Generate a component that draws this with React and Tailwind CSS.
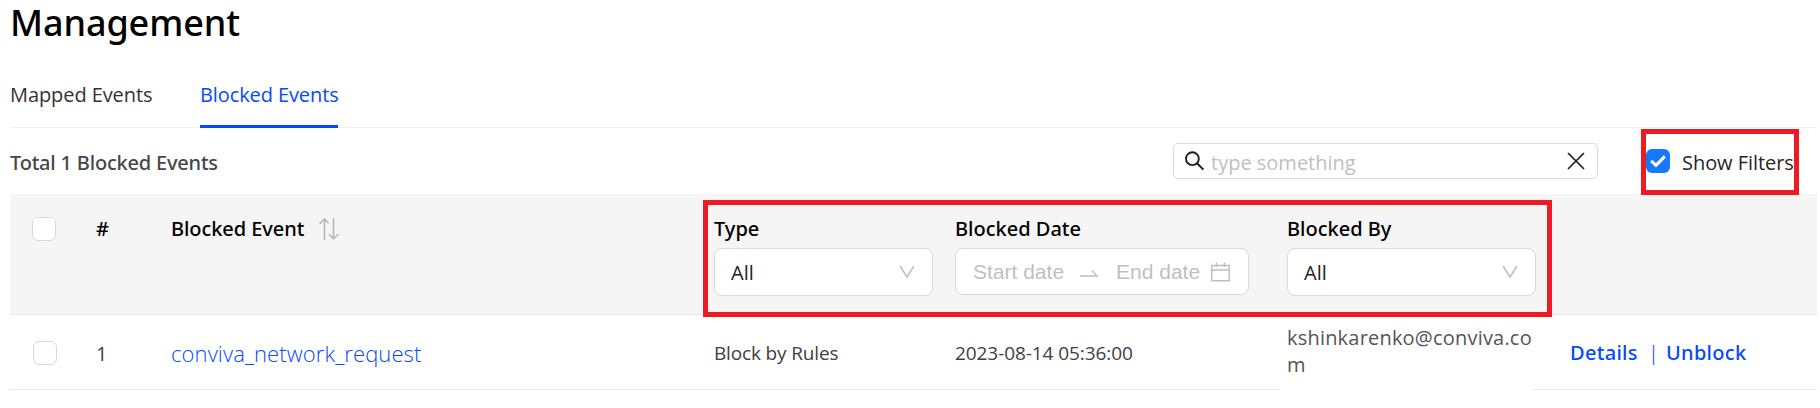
import React, { useState } from 'react';

const columns =
  'grid grid-cols-[86px_75px_543px_241px_332px_283px_1fr]';

const ChevronIcon = () => (
  <svg width="16" height="14" viewBox="0 0 16 14" fill="none" stroke="#bfbfbf" strokeWidth="1.6">
    <path d="M1 1 L8 12 L15 1" />
  </svg>
);

const SearchIcon = () => (
  <svg width="20" height="20" viewBox="0 0 20 20" fill="none" stroke="#1f1f1f" strokeWidth="1.9">
    <circle cx="7.4" cy="7.7" r="6.4" />
    <path d="M12 12.3 L18.4 18.6" strokeWidth="2" />
  </svg>
);

const CloseIcon = () => (
  <svg width="18" height="18" viewBox="0 0 18 18" fill="none" stroke="#1f1f1f" strokeWidth="1.7">
    <path d="M1 1 L17 17 M17 1 L1 17" />
  </svg>
);

const SortIcon = () => (
  <svg width="20" height="22" viewBox="0 0 20 22" fill="none" stroke="#b5b5b5" strokeWidth="1.5">
    <path d="M5.5 22 V1.5 M0.5 6 L5.5 1 L9.5 5.2" />
    <path d="M14.5 0 V20.5 M10 16.3 L14.5 20.7 L19.5 16" />
  </svg>
);

const RangeArrow = () => (
  <svg width="18" height="7" viewBox="0 0 18 7" fill="none" stroke="#bfbfbf" strokeWidth="1.5">
    <path d="M0 6 H17 L12 0.5" />
  </svg>
);

const CalendarIcon = () => (
  <svg width="19" height="20" viewBox="0 0 19 20" fill="none" stroke="#bfbfbf" strokeWidth="1.5">
    <path d="M0.75 3.5 H18.25 V18.75 H0.75 Z M0.75 8 H18.25 M5.5 0.5 V5 M13.5 0.5 V5" />
  </svg>
);

const EmptyBox = () => (
  <span className="block h-6 w-6 rounded-[6px] border border-[#d9d9d9] bg-white" />
);

const Select = ({ value, className }) => (
  <div
    className={`mt-[5px] flex h-12 items-center justify-between rounded-[8px] border border-[#d9d9d9] bg-white pl-[16px] pr-[17px] ${className}`}
  >
    <span className="pt-[2px] text-[#1f1f1f]">{value}</span>
    <ChevronIcon />
  </div>
);

const Heading = ({ children, className = 'text-black' }) => (
  <div className={`font-['Noto_Sans',sans-serif] font-medium ${className}`}>{children}</div>
);

export default function App() {
  const [showFilters, setShowFilters] = useState(true);

  return (
    <div className="relative h-[408px] w-[1820px] overflow-hidden bg-white pl-[10px] pr-[3px] font-['Open_Sans',sans-serif] text-[20px] leading-7 whitespace-nowrap">
      <h1 className="h-[46px] font-['Noto_Sans',sans-serif] text-[36px] leading-[46px] font-medium tracking-[-0.1px] text-black">
        Management
      </h1>

      {/* Tabs */}
      <div className="mt-[35px] flex h-[47px] gap-12 border-b border-[#f0f0f0]">
        <button type="button" className="h-7 w-[142px] text-left tracking-[-0.08px] text-[#333]">
          Mapped Events
        </button>
        <button
          type="button"
          className="h-[47px] w-[138px] border-b-[3px] border-[#0549ff] pb-4 text-left tracking-[-0.1px] text-[#0549ff]"
        >
          Blocked Events
        </button>
      </div>

      {/* Toolbar */}
      <div className="flex h-[66px] items-center">
        <Heading className="flex-1 pt-[3px] tracking-[-0.2px] text-[#474747]">
          Total 1 Blocked Events
        </Heading>
        <div className="flex h-9 w-[425px] items-center rounded-[5px] border border-[#d9d9d9] pr-[12px] pl-[11px]">
          <SearchIcon />
          <span className="ml-[6px] flex-1 pt-[3px] text-[#bfbfbf]">type something</span>
          <CloseIcon />
        </div>
        <label className="ml-[48px] flex w-[171px] items-center">
          <button
            type="button"
            onClick={() => setShowFilters(!showFilters)}
            className="flex h-6 w-6 items-center justify-center rounded-[6px] bg-[#1677ff]"
          >
            {showFilters && (
              <svg width="16" height="13" viewBox="0 0 16 13" fill="none" stroke="#fff" strokeWidth="3">
                <path d="M1.2 5.8 L6 10.4 L14.8 1.4" />
              </svg>
            )}
          </button>
          <span className="ml-[12px] pt-[3px] tracking-[-0.05px] text-[#262626]">Show Filters</span>
        </label>
      </div>

      {/* Table header */}
      <div className={`${columns} h-[121px] border-b border-[#ebebeb] bg-[#f5f5f5] pt-[21px]`}>
        <div className="pt-[2px] pl-[22px]"><EmptyBox /></div>
        <Heading>#</Heading>
        <div className="flex">
          <Heading className="tracking-[-0.07px] text-black">Blocked Event</Heading>
          <span className="mt-[3px] ml-[15px]"><SortIcon /></span>
        </div>
        <div>
          <Heading>Type</Heading>
          <Select value="All" className="w-[219px]" />
        </div>
        <div>
          <Heading>Blocked Date</Heading>
          <div className="mt-[5px] flex h-[47px] w-[294px] items-center rounded-[8px] border border-[#d9d9d9] bg-white pl-[17px] font-['Liberation_Sans',sans-serif] text-[21px] text-[#bfbfbf]">
            <span className="w-[107px]">Start date</span>
            <span className="mt-[3px] w-[36px]"><RangeArrow /></span>
            <span className="w-[95px]">End date</span>
            <CalendarIcon />
          </div>
        </div>
        <div>
          <Heading>Blocked By</Heading>
          <Select value="All" className="w-[249px]" />
        </div>
      </div>

      {/* Table row */}
      <div className={`${columns} h-[74px] items-center text-[#404040]`}>
        <div className="pt-[2px] pl-[23px]"><EmptyBox /></div>
        <div className="pt-[4px]">1</div>
        <a className="pt-[2px] text-[22px] font-light tracking-[0.1px] text-[#0549ff]">
          conviva_network_request
        </a>
        <div className="pt-[2px] text-[19px] tracking-[-0.15px]">Block by Rules</div>
        <div className="pt-[2px] text-[19px] tracking-[-0.08px]">2023-08-14 05:36:00</div>
        <div className="w-[247px] self-start pt-[9px] leading-[27px] tracking-[0.2px] break-all whitespace-normal text-[#555]">
          kshinkarenko@conviva.com
        </div>
        <div className="flex pt-[2px] font-['Noto_Sans',sans-serif] font-medium text-[#0549ff]">
          <a className="w-[78px] tracking-[0.3px]">Details</a>
          <span className="w-[18px] font-light">|</span>
          <a className="tracking-[0.3px]">Unblock</a>
        </div>
      </div>
      <div className="flex h-px gap-[252px]">
        <div className="w-[1270px] bg-[#ebebeb]" />
        <div className="flex-1 bg-[#ebebeb]" />
      </div>

      {/* Highlight frames */}
      <div className="pointer-events-none absolute top-[129px] left-[1641px] h-[66px] w-[158px] border-[5px] border-[#ed1c24]" />
      <div className="pointer-events-none absolute top-[200px] left-[703px] h-[117px] w-[849px] border-[5px] border-[#ed1c24]" />
    </div>
  );
}
